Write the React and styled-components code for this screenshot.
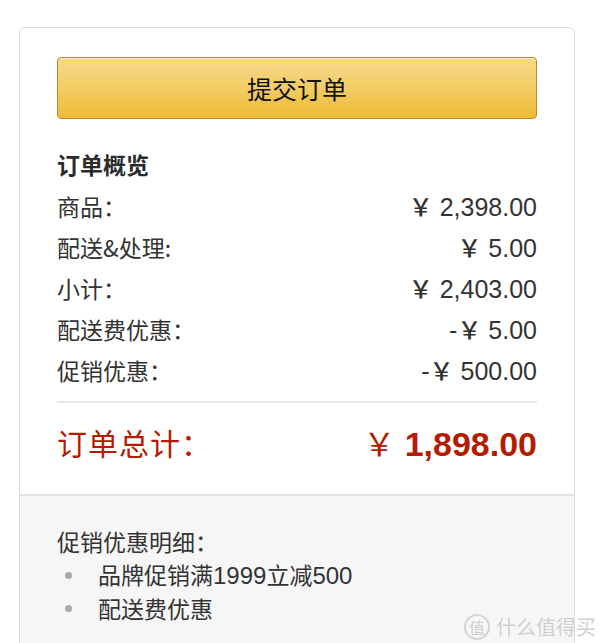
import React from "react";
import styled, { createGlobalStyle } from "styled-components";

const Global = createGlobalStyle`
  html, body { margin: 0; padding: 0; background: #fff; }
  body { font-family: "Liberation Sans", "Noto Sans CJK SC", sans-serif; color: #333; }
`;

const Page = styled.div`
  width: 600px;
  height: 643px;
  overflow: hidden;
  position: relative;
  padding: 27px 0 0 19px;
  box-sizing: border-box;
`;

const Panel = styled.div`
  width: 556px;
  border: 1px solid #dcdcdc;
  border-radius: 6px;
  box-sizing: border-box;
  overflow: hidden;
  background: #fff;
`;

const Top = styled.div`
  padding: 29px 37px 27px 37px;
  border-bottom: 2px solid #e3e3e3;
`;

const SubmitButton = styled.button`
  display: flex;
  align-items: center;
  justify-content: center;
  width: 100%;
  height: 62px;
  border: 1px solid #b98d2a;
  border-radius: 4px;
  background: linear-gradient(to bottom, #f7da8e 0%, #f3cd68 45%, #edbb35 100%);
  box-shadow: inset 0 1px 0 rgba(255,255,255,0.45);
  font-family: "Noto Sans CJK SC", sans-serif;
  font-size: 25px;
  color: #111;
  padding: 0;
  cursor: pointer;
`;

const Title = styled.div`
  margin-top: 25px;
  font-family: "Noto Sans CJK SC", sans-serif;
  font-weight: 700;
  font-size: 23px;
  line-height: 41px;
  color: #2b2b2b;
`;

const Row = styled.div`
  display: flex;
  justify-content: space-between;
  align-items: center;
  height: 41px;
`;

const Label = styled.span`
  font-family: "Noto Sans CJK SC", sans-serif;
  font-size: 23px;
  color: #333;
`;

const Amount = styled.span`
  font-family: "Liberation Sans", sans-serif;
  font-size: 25px;
  color: #333;
  white-space: pre;
`;

const Yen = styled.span`
  font-family: "Noto Sans CJK SC", sans-serif;
  font-size: ${(p) => (p.$big ? "32px" : "24px")};
  font-weight: ${(p) => (p.$big ? 400 : 500)};
`;

const Divider = styled.div`
  height: 2px;
  background: #e7e7e7;
  margin-top: 11px;
`;

const TotalRow = styled.div`
  display: flex;
  justify-content: space-between;
  align-items: center;
  height: 50px;
  margin-top: 14px;
  color: #b31c00;
`;

const TotalLabel = styled.span`
  font-family: "Noto Sans CJK SC", sans-serif;
  font-size: 30px;
  letter-spacing: 1px;
`;

const TotalAmount = styled.span`
  font-family: "Liberation Sans", sans-serif;
  font-weight: 700;
  font-size: 34px;
  white-space: pre;
`;

const Bottom = styled.div`
  background: #f6f6f6;
  padding: 29px 37px 40px 37px;
  font-family: "Noto Sans CJK SC", sans-serif;
  font-size: 23px;
  color: #333;
`;

const DetailTitle = styled.div`
  line-height: 33px;
`;

const List = styled.ul`
  list-style: none;
  margin: 0;
  padding: 0 0 0 8px;
`;

const Item = styled.li`
  display: flex;
  align-items: center;
  gap: 26px;
  line-height: 33px;
  &::before {
    content: "";
    width: 7px;
    height: 7px;
    border-radius: 50%;
    background: #aaa;
    flex: none;
  }
`;

const Num = styled.span`
  font-family: "Liberation Sans", sans-serif;
  font-size: 24px;
`;

const Watermark = styled.div`
  position: absolute;
  right: 4px;
  bottom: 2px;
  display: flex;
  align-items: center;
  gap: 6px;
  font-family: "Noto Sans CJK SC", sans-serif;
  font-size: 20px;
  color: rgba(200, 200, 200, 0.85);
`;

const Badge = styled.span`
  display: inline-flex;
  align-items: center;
  justify-content: center;
  width: 26px;
  height: 26px;
  border-radius: 50%;
  border: 2px solid rgba(210, 210, 210, 0.9);
  font-size: 16px;
  box-sizing: border-box;
`;

const rows = [
  { label: "商品：", amount: "2,398.00", neg: false },
  { label: "配送&处理:", amount: "5.00", neg: false },
  { label: "小计：", amount: "2,403.00", neg: false },
  { label: "配送费优惠：", amount: "5.00", neg: true },
  { label: "促销优惠：", amount: "500.00", neg: true },
];

export default function App() {
  return (
    <>
      <Global />
      <Page>
        <Panel>
          <Top>
            <SubmitButton>提交订单</SubmitButton>
            <Title>订单概览</Title>
            {rows.map((r) => (
              <Row key={r.label}>
                <Label>{r.label}</Label>
                <Amount>
                  {r.neg ? "-" : ""}
                  <Yen>￥</Yen> {r.amount}
                </Amount>
              </Row>
            ))}
            <Divider />
            <TotalRow>
              <TotalLabel>订单总计：</TotalLabel>
              <TotalAmount>
                <Yen $big>￥</Yen> 1,898.00
              </TotalAmount>
            </TotalRow>
          </Top>
          <Bottom>
            <DetailTitle>促销优惠明细：</DetailTitle>
            <List>
              <Item>
                <span>
                  品牌促销满<Num>1999</Num>立减<Num>500</Num>
                </span>
              </Item>
              <Item>配送费优惠</Item>
            </List>
          </Bottom>
        </Panel>
        <Watermark>
          <Badge>值</Badge>
          什么值得买
        </Watermark>
      </Page>
    </>
  );
}
